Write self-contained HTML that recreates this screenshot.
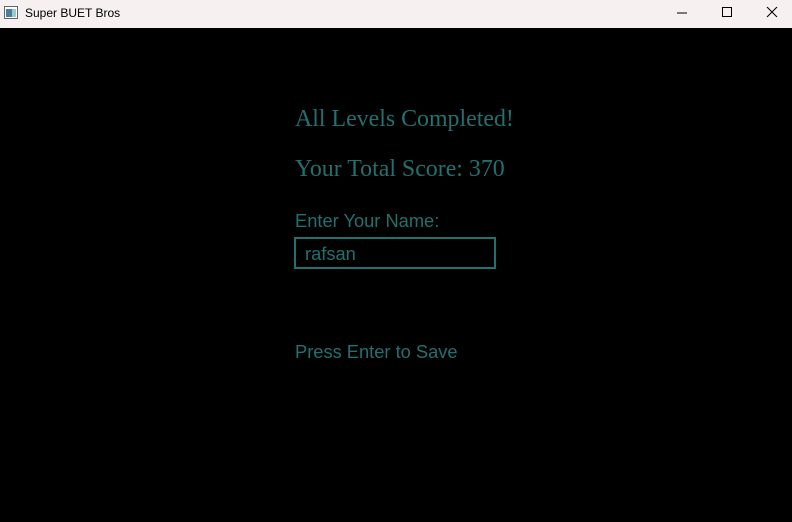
<!DOCTYPE html>
<html><head><style>
body{margin:0;width:792px;height:522px;background:#000;position:relative;overflow:hidden}
.tb{position:absolute;left:0;top:0;width:792px;height:28px;background:#f7f0f0;font:12px "Liberation Sans",sans-serif;color:#000}
.t{position:absolute;white-space:nowrap;color:#237070}
.s{font-family:"Liberation Serif",serif;font-size:24px;transform:scaleX(0.995);transform-origin:left}
.a{font-family:"Liberation Sans",sans-serif;font-size:18.3px}
</style></head><body>
<div class="tb">
<svg style="position:absolute;left:4px;top:6px" width="14" height="13"><rect x="0.5" y="0.5" width="13" height="12" fill="#fff" stroke="#666"/><rect x="2" y="3" width="6" height="8" fill="#4a7fa0"/><rect x="8" y="3" width="4" height="8" fill="#9cc"/></svg>
<span style="position:absolute;left:25px;top:6px">Super BUET Bros</span>
<svg style="position:absolute;left:676px;top:7px" width="12" height="12"><line x1="1" y1="6" x2="11" y2="6" stroke="#000"/></svg>
<svg style="position:absolute;left:721px;top:6px" width="12" height="12"><rect x="1.5" y="1.5" width="9" height="9" fill="none" stroke="#000"/></svg>
<svg style="position:absolute;left:766px;top:6px" width="12" height="12"><path d="M1 1L11 11M11 1L1 11" stroke="#000"/></svg>
</div>
<div class="t s" style="left:295px;top:106px">All Levels Completed!</div>
<div class="t s" style="left:295px;top:156px">Your Total Score: 370</div>
<div class="t a" style="left:295px;top:210px">Enter Your Name:</div>
<div style="position:absolute;left:294px;top:237px;width:198px;height:28px;border:2px solid #237070"></div>
<div class="t a" style="left:305px;top:243px">rafsan</div>
<div class="t a" style="left:295px;top:341px">Press Enter to Save</div>
</body></html>
